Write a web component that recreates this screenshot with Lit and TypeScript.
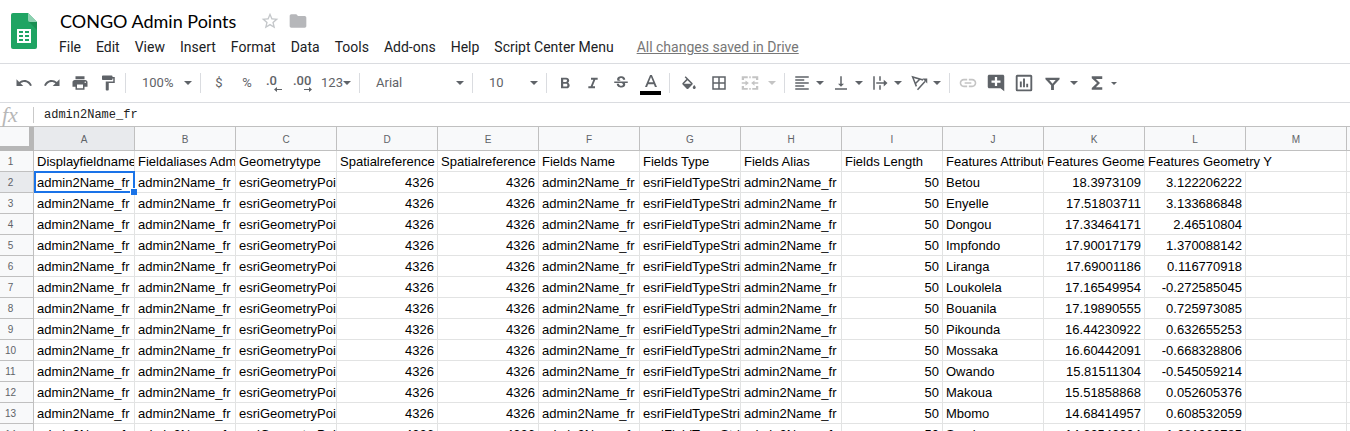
import { LitElement, html, css, svg, nothing } from "lit";
import { customElement, property } from "lit/decorators.js";

const MENUS = ["File", "Edit", "View", "Insert", "Format", "Data", "Tools", "Add-ons", "Help", "Script Center Menu"];

const COLUMNS = [..."ABCDEFGHIJKLM", ""];

const HEADINGS = [
  "Displayfieldname", "Fieldaliases Admin2Name_fr", "Geometrytype", "Spatialreference Wkid",
  "Spatialreference Latestwkid", "Fields Name", "Fields Type", "Fields Alias", "Fields Length",
  "Features Attributes", "Features Geometry X", "Features Geometry Y",
];

const PLACES: [string, string, string][] = [
  ["Betou", "18.3973109", "3.122206222"],
  ["Enyelle", "17.51803711", "3.133686848"],
  ["Dongou", "17.33464171", "2.46510804"],
  ["Impfondo", "17.90017179", "1.370088142"],
  ["Liranga", "17.69001186", "0.116770918"],
  ["Loukolela", "17.16549954", "-0.272585045"],
  ["Bouanila", "17.19890555", "0.725973085"],
  ["Pikounda", "16.44230922", "0.632655253"],
  ["Mossaka", "16.60442091", "-0.668328806"],
  ["Owando", "15.81511304", "-0.545059214"],
  ["Makoua", "15.51858868", "0.052605376"],
  ["Mbomo", "14.68414957", "0.608532059"],
  ["Sembe", "14.22542204", "1.681960785"],
];

const ICONS: Record<string, unknown> = {
  undo: svg`<path d="M12.5 8c-2.65 0-5.05.99-6.9 2.6L2 7v9h9l-3.62-3.62c1.39-1.16 3.16-1.88 5.12-1.88 3.54 0 6.55 2.31 7.6 5.5l2.37-.78C21.08 11.03 17.15 8 12.5 8z"/>`,
  redo: svg`<path d="M18.4 10.6C16.55 8.99 14.15 8 11.5 8c-4.65 0-8.58 3.03-9.96 7.22L3.9 16c1.05-3.19 4.05-5.5 7.6-5.5 1.95 0 3.73.72 5.12 1.88L13 16h9V7l-3.6 3.6z"/>`,
  print: svg`<path d="M19 8H5c-1.66 0-3 1.34-3 3v6h4v4h12v-4h4v-6c0-1.66-1.34-3-3-3zm-3 11H8v-5h8v5zm3-7c-.55 0-1-.45-1-1s.45-1 1-1 1 .45 1 1-.45 1-1 1zm-1-9H6v4h12V3z"/>`,
  paint: svg`<path d="M18 4V3c0-.55-.45-1-1-1H5c-.55 0-1 .45-1 1v4c0 .55.45 1 1 1h12c.55 0 1-.45 1-1V6h1v4H9v11c0 .55.45 1 1 1h2c.55 0 1-.45 1-1v-9h8V4h-3z"/>`,
  bold: svg`<path d="M16.600 11.500c1-.8 1.700-2 1.700-3.200C18.300 5.700 16.400 4 13.800 4H6v16h8.600c2.500 0 4.400-1.900 4.400-4.300 0-1.800-.9-3.400-2.400-4.200zM9.300 6.800h4c.9 0 1.700.8 1.700 1.800s-.8 1.800-1.700 1.800h-4V6.800zm4.500 10.400H9.300v-4h4.500c1 0 1.800.9 1.800 2s-.8 2-1.800 2z"/>`,
  italic: svg`<path d="M9 4v3h3.500l-4 10H5v3h10v-3h-3.500l4-10H19V4z"/>`,
  strike: svg`<path d="M7.240 8.750c-.26-.48-.39-1.030-.39-1.670 0-.61.13-1.160.4-1.670.26-.5.63-.93 1.110-1.290.48-.35 1.050-.63 1.700-.83.66-.19 1.390-.29 2.180-.29.81 0 1.540.11 2.210.34.66.22 1.230.54 1.690.94.47.4.83.88 1.080 1.430.25.55.38 1.150.38 1.810h-3.010c0-.31-.05-.59-.15-.85-.09-.27-.24-.49-.44-.68-.2-.19-.45-.33-.75-.44-.3-.1-.66-.16-1.060-.16-.39 0-.74.04-1.030.13-.29.09-.53.21-.72.36-.19.16-.34.34-.44.55-.1.21-.15.43-.15.66 0 .48.25.88.74 1.210.38.25.77.48 1.410.7H7.390c-.05-.08-.11-.17-.15-.25zM21 12v-2H3v2h9.620c.18.07.4.14.55.2.37.17.66.34.87.51.21.17.35.36.43.57.07.2.11.43.11.69 0 .23-.05.45-.14.66-.09.2-.23.38-.42.53-.19.15-.42.26-.71.35-.29.08-.63.13-1.010.13-.43 0-.83-.04-1.180-.13s-.66-.23-.91-.42c-.25-.19-.45-.44-.59-.75-.14-.31-.25-.76-.25-1.210H6.400c0 .55.08 1.130.24 1.580.16.45.37.85.65 1.210.28.35.6.66.98.92.37.26.78.48 1.220.65.44.17.9.3 1.380.39.48.08.96.13 1.440.13.8 0 1.530-.09 2.180-.28s1.210-.45 1.670-.79c.46-.34.82-.77 1.070-1.270s.38-1.070.38-1.710c0-.6-.1-1.140-.31-1.610-.05-.11-.11-.23-.17-.33H21z"/>`,
  color: svg`<path transform="translate(-2.76 1.6) scale(1.23)" d="M11 3 5.500 16h2.250l1.120-3h6.250l1.120 3h2.250L13 3h-2zm-1.380 8L12 5.140 14.380 11H9.620z"/>`,
  fill: svg`<path d="M16.560 8.940 7.620 0 6.210 1.410l2.380 2.380-5.150 5.150c-.59.59-.59 1.540 0 2.120l5.500 5.500c.29.29.68.44 1.060.44s.77-.15 1.060-.44l5.500-5.500c.59-.58.59-1.530 0-2.120zM5.210 10 10 5.210 14.790 10H5.210zM19 11.500s-2 2.170-2 3.500c0 1.100.9 2 2 2s2-.9 2-2c0-1.330-2-3.500-2-3.500z" transform="translate(0 3)"/>`,
  borders: svg`<path d="M3 3v18h18V3H3zm8 16H5v-6h6v6zm0-8H5V5h6v6zm8 8h-6v-6h6v6zm0-8h-6V5h6v6z"/>`,
  merge: svg`<path d="M1 3h8v2.500H4V8H1V3zm10 0h2v2.500h-2V3zm4 0h8v5h-3V5.500h-5V3zM1 16h3v2.500h5V21H1v-5zm10 2.500h2V21h-2v-2.500zM20 16h3v5h-8v-2.500h5V16zM1 11h5V8.500l4.500 3.500L6 15.500V13H1v-2zm22 0h-5V8.500L13.500 12l4.500 3.500V13h5v-2z"/>`,
  align: svg`<path d="M15 15H3v2h12v-2zm0-8H3v2h12V7zM3 13h18v-2H3v2zm0 8h18v-2H3v2zM3 3v2h18V3H3z"/>`,
  valign: svg`<path d="M16 13h-3V3h-2v10H8l4 4 4-4zM4 19v2h16v-2H4z"/>`,
  wrap: svg`<path d="M3 3h2v18H3V3zm8 0h2v6h-2V3zm0 12h2v6h-2v-6zM7 11h10V7.500l5 4.500-5 4.500V13H7v-2z"/>`,
  rotate: svg`<path d="M17.500 8 3.500 4l5 12.500M13 7l-6 6M10 21 20 10" fill="none" stroke="currentColor" stroke-width="2"/><path d="M23 6v6.500L16.500 6z"/>`,
  link: svg`<path d="M3.900 12c0-1.710 1.390-3.100 3.100-3.100h4V7H7c-2.760 0-5 2.240-5 5s2.240 5 5 5h4v-1.900H7c-1.710 0-3.100-1.390-3.100-3.100zM8 13h8v-2H8v2zm9-6h-4v1.900h4c1.710 0 3.100 1.390 3.100 3.100s-1.390 3.100-3.100 3.100h-4V17h4c2.760 0 5-2.240 5-5s-2.240-5-5-5z"/>`,
  comment: svg`<path d="M23 3c0-1.100-.9-2-2-2H3c-1.100 0-2 .9-2 2v14c0 1.100.9 2 2 2h15l5 4V3zm-5 8.500h-4.500V16h-3v-4.500H6v-3h4.500V4h3v4.500H18v3z"/>`,
  chart: svg`<path d="M6.500 10h2.500v7.500H6.500V10zm4.250-4h2.500v11.500h-2.500V6zM15 13h2.500v4.500H15V13zM21 1H3a2 2 0 0 0-2 2v18a2 2 0 0 0 2 2h18a2 2 0 0 0 2-2V3a2 2 0 0 0-2-2zm-.5 19.500h-17v-17h17v17z"/>`,
  filter: svg`<path d="M2 4v2l8 8.500V21h4v-6.500L22 6V4H2zm5.500 3h9L12 12.200 7.500 7z"/>`,
  sum: svg`<path d="M19 3H5v2.500l7 6.500-7 6.500V21h14v-3.500H10.500L16 12l-5.500-5.500H19V3z"/>`,
  star: svg`<path d="M22 9.240l-7.190-.62L12 2 9.190 8.630 2 9.240l5.460 4.730L5.820 21 12 17.270 18.180 21l-1.630-7.030L22 9.240zM12 15.400l-3.760 2.270 1-4.280-3.320-2.880 4.380-.38L12 6.100l1.710 4.040 4.380.38-3.320 2.880 1 4.280L12 15.400z"/>`,
  folder: svg`<path d="M10 4H4c-1.100 0-2 .9-2 2v12c0 1.100.9 2 2 2h16c1.100 0 2-.9 2-2V8c0-1.100-.9-2-2-2h-8l-2-2z"/>`,
};

const icon = (name: string, size = 18) =>
  html`<svg class="icon" width=${size} height=${size} viewBox="0 0 24 24" aria-hidden="true">${ICONS[name]}</svg>`;

const caret = html`<svg class="caret" width="8" height="4" viewBox="0 0 8 4" aria-hidden="true"><path d="M0 0h8L4 4z" /></svg>`;
const smallCaret = html`<svg class="caret" width="6" height="3" viewBox="0 0 8 4" aria-hidden="true"><path d="M0 0h8L4 4z" /></svg>`;

@customElement("sheet-header")
class SheetHeader extends LitElement {
  static styles = css`
    :host { display: flex; height: 63px; border-bottom: 1px solid #dadce0; font-family: Roboto, sans-serif; }
    .logo { flex: none; margin: 13px 22px 0 11px; }
    .body { display: flex; flex-direction: column; padding-top: 8px; }
    .title-row { display: flex; align-items: center; height: 26px; }
    .title { margin: 0 24px 0 1px; font: 400 18px/26px Lato, sans-serif; color: #000; white-space: nowrap; }
    button { padding: 0; border: 0; background: none; display: flex; }
    .star { margin-right: 8px; fill: #c4c7ca; }
    .folder { fill: #b6b7ba; }
    .menus { display: flex; align-items: center; height: 26px; white-space: nowrap; }
    .menus button { margin-right: 15px; font: 400 14px/26px Roboto, sans-serif; color: #202124; }
    .saved { margin-left: 8px; font-size: 14px; line-height: 24px; color: #777; }
  `;
  render() {
    return html`
      <svg class="logo" width="26" height="36" viewBox="0 0 26 36" role="img" aria-label="Sheets">
        <path fill="#1fa463" d="M2 0h15l9 9v25a2 2 0 0 1-2 2H2a2 2 0 0 1-2-2V2a2 2 0 0 1 2-2z" />
        <path fill="#188f52" d="M18 9h8v8z" />
        <path fill="#8ed1b1" d="M17 0l9 9h-7a2 2 0 0 1-2-2z" />
        <path fill="#fff" fill-rule="evenodd" d="M6 16h14v14H6zM8 18v2h4v-2zM14 18v2h4v-2zM8 22v2h4v-2zM14 22v2h4v-2zM8 26v2h4v-2zM14 26v2h4v-2z" />
      </svg>
      <div class="body">
        <div class="title-row">
          <h1 class="title">CONGO Admin Points</h1>
          <button class="star" aria-label="Star">${icon("star", 20)}</button>
          <button class="folder" aria-label="Move to folder">${icon("folder", 20)}</button>
        </div>
        <nav class="menus">
          ${MENUS.map((m) => html`<button>${m}</button>`)}
          <a class="saved" href="#">All changes saved in Drive</a>
        </nav>
      </div>
    `;
  }
}

@customElement("sheet-toolbar")
class SheetToolbar extends LitElement {
  static styles = css`
    :host { display: flex; align-items: center; height: 38px; padding-left: 10px; border-bottom: 1px solid #dadce0; color: #5f6368; fill: #5f6368; }
    button { display: flex; flex: none; align-items: center; justify-content: center; width: 28px; height: 26px; padding: 0; border: 0; background: none; color: inherit; fill: inherit; font: 400 13px/16px Roboto, sans-serif; }
    .icon { flex: none; }
    .caret { flex: none; }
    .sep { flex: none; width: 1px; height: 20px; background: #dadce0; }
    .pick { justify-content: space-between; }
    .zoom { width: 50px; margin: 0 8px 0 16px; }
    .font { width: 88px; margin: 0 8px 0 16px; }
    .size { width: 49px; margin: 0 8px 0 16px; }
    .split { width: 31px; margin-right: 8px; gap: 5px; }
    .format { width: 34px; margin: 0 6px 0 7px; }
    .wide { width: 46px; gap: 9px; }
    .sum { width: 37px; gap: 5px; }
    .off { fill: #c4c4c4; }
    .decimal { flex-direction: column; align-items: flex-end; width: 19px; height: 18px; line-height: 12px; font-weight: 500; }
    .decimal span { align-self: flex-start; }
    .less { width: 16px; margin: 0 11px 0 5px; }
    .swatch { flex-direction: column; width: 21px; margin: 0 8px 0 5px; gap: 2px; }
    .bar { width: 21px; height: 4px; background: #000; }
    .group { display: flex; align-items: center; }
    .first { padding-right: 3px; }
    .num { padding-left: 4px; }
    .text { padding-left: 4px; }
    .cells { padding: 0 3px 0 5px; }
    .cells button { margin-right: 2px; }
    .cells .wide { margin-right: 0; }
    .lay { padding-left: 8px; }
    .ins { padding-left: 4px; }
  `;
  render() {
    return html`
      <div class="group first">
        <button aria-label="Undo">${icon("undo")}</button>
        <button aria-label="Redo">${icon("redo")}</button>
        <button aria-label="Print">${icon("print")}</button>
        <button aria-label="Paint format">${icon("paint")}</button>
      </div>
      <span class="sep"></span>
      <button class="pick zoom" aria-label="Zoom">100%${caret}</button>
      <span class="sep"></span>
      <div class="group num">
        <button aria-label="Currency">$</button>
        <button aria-label="Percent">%</button>
        <button class="decimal less" aria-label="Decrease decimal places"><span>.0</span>
          <svg width="8" height="5" viewBox="0 0 8 5"><path d="M0 2.500 3 0v2h5v1H3v2z" /></svg>
        </button>
        <button class="decimal" aria-label="Increase decimal places"><span>.00</span>
          <svg width="8" height="5" viewBox="0 0 8 5"><path d="M8 2.500 5 0v2H0v1h5v2z" /></svg>
        </button>
        <button class="format" aria-label="More formats">123${caret}</button>
      </div>
      <span class="sep"></span>
      <button class="pick font" aria-label="Font">Arial${caret}</button>
      <span class="sep"></span>
      <button class="pick size" aria-label="Font size">10${caret}</button>
      <span class="sep"></span>
      <div class="group text">
        <button aria-label="Bold">${icon("bold", 16)}</button>
        <button aria-label="Italic">${icon("italic", 16)}</button>
        <button aria-label="Strikethrough">${icon("strike")}</button>
        <button class="swatch" aria-label="Text color">${icon("color")}<span class="bar"></span></button>
      </div>
      <span class="sep"></span>
      <div class="group cells">
        <button aria-label="Fill color">${icon("fill")}</button>
        <button aria-label="Borders">${icon("borders")}</button>
        <button class="wide off" aria-label="Merge cells" disabled>${icon("merge")}${caret}</button>
      </div>
      <span class="sep"></span>
      <div class="group lay">
        ${["align", "valign", "wrap", "rotate"].map((n) => html`<button class="split" aria-label=${n}>${icon(n)}${caret}</button>`)}
      </div>
      <span class="sep"></span>
      <div class="group ins">
        <button class="off" aria-label="Insert link" disabled>${icon("link", 20)}</button>
        <button aria-label="Insert comment">${icon("comment")}</button>
        <button aria-label="Insert chart">${icon("chart")}</button>
        <button class="wide" aria-label="Filter">${icon("filter", 17)}${caret}</button>
        <button class="sum" aria-label="Functions">${icon("sum")}${smallCaret}</button>
      </div>
    `;
  }
}

@customElement("formula-bar")
class FormulaBar extends LitElement {
  @property() value = "";
  static styles = css`
    :host { display: flex; align-items: center; height: 23px; border-bottom: 1px solid #c0c0c0; }
    .fx { box-sizing: border-box; flex: none; width: 33px; padding-left: 2px; font: italic 400 22px/22px "Liberation Serif", serif; color: #b7b7b7; }
    .input { flex: 1; min-width: 0; height: 16px; padding: 0 0 0 10px; border: 0; border-left: 1px solid #c9c9c9; outline: 0; background: none; font: 400 12px/16px "Liberation Mono", monospace; color: #222; }
  `;
  render() {
    return html`<label class="fx" for="fx">fx</label><input class="input" id="fx" .value=${this.value} />`;
  }
}

@customElement("sheet-grid")
class SheetGrid extends LitElement {
  static styles = css`
    :host { display: block; overflow: hidden; }
    table { width: 1448px; table-layout: fixed; border-collapse: separate; border-spacing: 0; font: 400 13px/19px "Liberation Sans", Arial, sans-serif; color: #000; }
    .rownum { width: 34px; }
    .data { width: 101px; }
    th, td { box-sizing: border-box; height: 21px; padding: 1px 3px 0; border: 0 solid #e2e3e3; border-width: 0 1px 1px 0; overflow: hidden; text-align: left; white-space: nowrap; }
    th { background: #f8f9fa; border-color: #c0c0c0; font-size: 10px; font-weight: 400; color: #5f6368; text-align: center; }
    thead th { height: 24px; }
    thead .corner { border-color: #b7b7b7; border-width: 0 5px 5px 0; }
    tbody th { padding: 1px 12px 0 0; }
    .on { background: #e8eaed; }
    .right { text-align: right; }
    .selected { position: relative; overflow: visible; }
    .selected::before { content: ""; position: absolute; inset: -1px -1px -1px 0; border: 2px solid #1a73e8; }
    .selected::after { content: ""; position: absolute; right: -3px; bottom: -3px; z-index: 1; width: 6px; height: 6px; border: solid #fff; border-width: 1px 0 0 1px; background: #1a73e8; }
  `;
  render() {
    return html`
      <table>
        <colgroup>
          <col class="rownum" />
          ${COLUMNS.map(() => html`<col class="data" />`)}
        </colgroup>
        <thead>
          <tr>
            <th class="corner"></th>
            ${COLUMNS.map((c, i) => html`<th scope="col" class=${i === 0 ? "on" : nothing}>${c}</th>`)}
          </tr>
        </thead>
        <tbody>
          <tr>
            <th scope="row">1</th>
            ${HEADINGS.map((h, i) => html`<td colspan=${i === HEADINGS.length - 1 ? 2 : 1}>${h}</td>`)}
            <td></td>
          </tr>
          ${PLACES.map(([name, x, y], i) => html`
            <tr>
              <th scope="row" class=${i === 0 ? "on" : nothing}>${i + 2}</th>
              <td class=${i === 0 ? "selected" : nothing}>admin2Name_fr</td>
              <td>admin2Name_fr</td>
              <td>esriGeometryPoint</td>
              <td class="right">4326</td>
              <td class="right">4326</td>
              <td>admin2Name_fr</td>
              <td>esriFieldTypeString</td>
              <td>admin2Name_fr</td>
              <td class="right">50</td>
              <td>${name}</td>
              <td class="right">${x}</td>
              <td class="right">${y}</td>
              <td></td>
              <td></td>
            </tr>
          `)}
        </tbody>
      </table>
    `;
  }
}

@customElement("app-root")
class AppRoot extends LitElement {
  static styles = css`
    :host { display: flex; flex-direction: column; height: 100vh; overflow: hidden; background: #fff; }
    .fixed { flex: none; }
    .grid { flex: 1; min-height: 0; }
  `;
  render() {
    return html`
      <sheet-header class="fixed"></sheet-header>
      <sheet-toolbar class="fixed"></sheet-toolbar>
      <formula-bar class="fixed" value="admin2Name_fr"></formula-bar>
      <sheet-grid class="grid"></sheet-grid>
    `;
  }
}
